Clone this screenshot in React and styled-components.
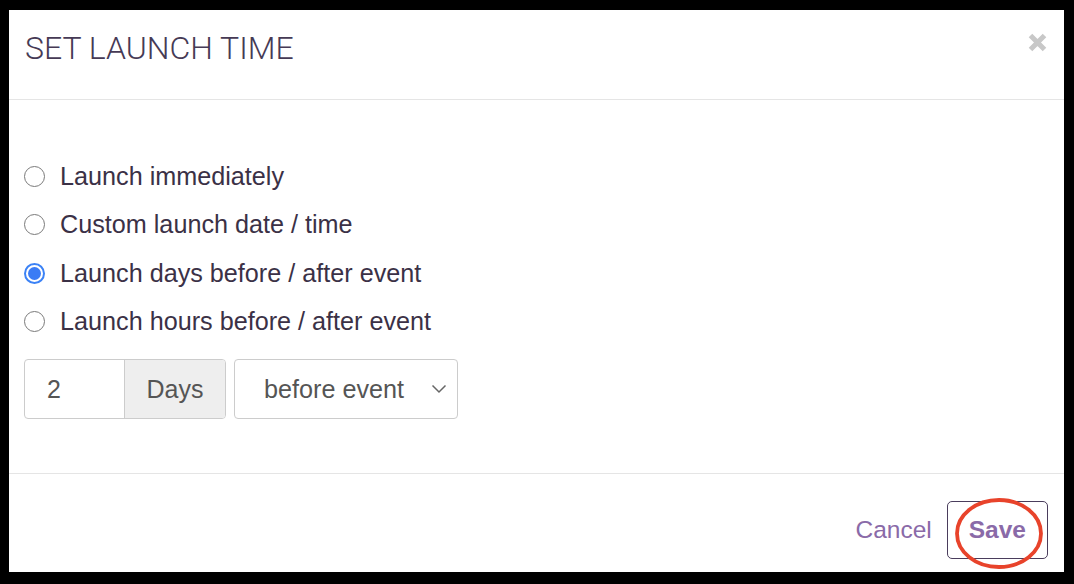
import React, { useState } from "react";
import styled, { createGlobalStyle } from "styled-components";

const Global = createGlobalStyle`
  html, body { margin: 0; padding: 0; background: #000; }
  body { font-family: "Liberation Sans", Arial, sans-serif; }
`;

const Frame = styled.div`
  width: 1074px;
  height: 584px;
  box-sizing: border-box;
  padding: 10px 10px 12px 9px;
  background: #000;
`;

const Modal = styled.div`
  background: #fff;
  height: 100%;
  display: flex;
  flex-direction: column;
`;

const Header = styled.div`
  height: 89px;
  border-bottom: 1px solid #e5e5e5;
  display: flex;
  align-items: flex-start;
  justify-content: space-between;
  padding: 0 16px;
`;

const Title = styled.h3`
  margin: 18px 0 0;
  font-family: Roboto, "Liberation Sans", sans-serif;
  font-weight: 300;
  font-size: 32px;
  line-height: 40px;
  color: #463a55;
`;

const Close = styled.button`
  border: 0;
  background: none;
  padding: 0;
  width: 19px;
  height: 19px;
  margin-top: 23px;
  margin-right: 1px;
  cursor: pointer;
`;

const Body = styled.div`
  flex: 1;
  padding: 52px 16px 0 15px;
  border-bottom: 1px solid #e5e5e5;
`;

const Option = styled.label`
  height: 48.5px;
  display: flex;
  align-items: center;
  gap: 15px;
  font-size: 25.2px;
  color: #3b3146;
  cursor: pointer;
`;

const Radio = styled.span`
  width: 21px;
  height: 21px;
  border-radius: 50%;
  box-sizing: border-box;
  border: ${p => (p.checked ? "2px solid #3b82f6" : "1.5px solid #7a7a7a")};
  display: flex;
  align-items: center;
  justify-content: center;
  &::after {
    content: "";
    width: 13px;
    height: 13px;
    border-radius: 50%;
    background: ${p => (p.checked ? "#3b7cf5" : "transparent")};
  }
`;

const Controls = styled.div`
  display: flex;
  gap: 8px;
  margin-top: 13px;
`;

const InputGroup = styled.div`
  display: flex;
  height: 60px;
  border: 1px solid #ccc;
  border-radius: 4px;
  box-sizing: border-box;
  overflow: hidden;
`;

const NumberInput = styled.div`
  width: 100px;
  box-sizing: border-box;
  padding-left: 22px;
  display: flex;
  align-items: center;
  font-size: 25px;
  color: #555;
  border-right: 1px solid #ccc;
`;

const Addon = styled.div`
  width: 100px;
  display: flex;
  align-items: center;
  justify-content: center;
  background: #eee;
  font-size: 25px;
  color: #555;
`;

const Select = styled.div`
  width: 224px;
  height: 60px;
  box-sizing: border-box;
  border: 1px solid #ccc;
  border-radius: 4px;
  display: flex;
  align-items: center;
  justify-content: space-between;
  padding: 0 10px 0 29px;
  font-size: 25.2px;
  color: #555;
`;

const Footer = styled.div`
  height: 98px;
  display: flex;
  align-items: center;
  justify-content: flex-end;
  gap: 14px;
  padding: 14px 16px 0;
  box-sizing: border-box;
`;

const LinkButton = styled.button`
  border: ${p => (p.outlined ? "1px solid #4a3d5c" : "1px solid transparent")};
  border-radius: 5px;
  background: #fff;
  height: 58px;
  padding: 0 ${p => (p.outlined ? "21px" : "0")};
  font-family: "Liberation Sans", Arial, sans-serif;
  font-size: 24.5px;
  font-weight: ${p => (p.outlined ? 700 : 400)};
  color: #8a6aa8;
  position: relative;
  cursor: pointer;
`;

const Highlight = styled.svg`
  position: absolute;
  left: 7px;
  top: -4px;
  width: 88px;
  height: 71px;
  pointer-events: none;
  overflow: visible;
`;

const options = [
  "Launch immediately",
  "Custom launch date / time",
  "Launch days before / after event",
  "Launch hours before / after event",
];

export default function App() {
  const [choice, setChoice] = useState(2);
  return (
    <Frame>
      <Global />
      <Modal>
        <Header>
          <Title>SET LAUNCH TIME</Title>
          <Close aria-label="Close">
            <svg width="19" height="19" viewBox="0 0 19 19">
              <path d="M2.5 2.5 L16.5 16.5 M16.5 2.5 L2.5 16.5" stroke="#c8c8c8" strokeWidth="5" />
            </svg>
          </Close>
        </Header>
        <Body>
          {options.map((o, i) => (
            <Option key={o} onClick={() => setChoice(i)}>
              <Radio checked={choice === i} />
              {o}
            </Option>
          ))}
          <Controls>
            <InputGroup>
              <NumberInput>2</NumberInput>
              <Addon>Days</Addon>
            </InputGroup>
            <Select>
              before event
              <svg width="16" height="10" viewBox="0 0 16 10">
                <path d="M1.5 1.5 L8 8 L14.5 1.5" fill="none" stroke="#666" strokeWidth="1.5" />
              </svg>
            </Select>
          </Controls>
        </Body>
        <Footer>
          <LinkButton>Cancel</LinkButton>
          <LinkButton outlined>
            Save
            <Highlight viewBox="0 0 88 71">
              <ellipse cx="44" cy="35.5" rx="42" ry="33.5" fill="none" stroke="#e8432b" strokeWidth="3.8" />
            </Highlight>
          </LinkButton>
        </Footer>
      </Modal>
    </Frame>
  );
}
